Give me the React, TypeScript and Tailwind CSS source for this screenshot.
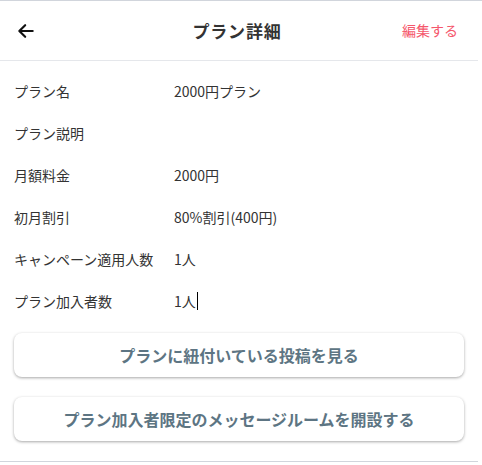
export default function App() {
  const rows = [
    { label: 'プラン名', value: '2000円プラン' },
    { label: 'プラン説明', value: '' },
    { label: '月額料金', value: '2000円' },
    { label: '初月割引', value: '80%割引(400円)' },
    { label: 'キャンペーン適用人数', value: '1人' },
    { label: 'プラン加入者数', value: '1人', caret: true },
  ];

  return (
    <div
      className="w-[482px] h-[465px] bg-white border-t border-gray-300 text-[#333]"
      style={{ fontFamily: '"Noto Sans CJK JP", "Noto Sans", sans-serif' }}
    >
      <div className="w-[478px]">
        <header className="h-[60px] flex items-center justify-between px-4 border-b border-gray-200">
          <svg width="20" height="20" viewBox="0 0 24 24" fill="none" stroke="#111" strokeWidth="2.6" strokeLinecap="round" strokeLinejoin="round">
            <path d="M20 12H5" />
            <path d="M11 5l-7 7 7 7" />
          </svg>
          <h1 className="text-[17px] font-bold ml-9 tracking-wider">プラン詳細</h1>
          <button className="text-[14px] text-[#f5576c] pr-1">編集する</button>
        </header>

        <div className="pt-[17px] pl-[14px]">
          {rows.map((r) => (
            <div key={r.label} className="h-[42px] flex items-start text-[14px]">
              <div className="w-[160px] leading-[26px]">{r.label}</div>
              <div className="leading-[26px] flex items-center">
                {r.value}
                {r.caret && <span className="inline-block w-px h-[18px] bg-black ml-[1px]" />}
              </div>
            </div>
          ))}
        </div>

        <div className="px-[14px] pt-[3px] flex flex-col gap-[20px]">
          <button className="h-[44px] rounded-lg bg-white shadow-[0_1px_3px_rgba(0,0,0,0.35)] text-[16px] font-bold text-[#5d7583]">
            プランに紐付いている投稿を見る
          </button>
          <button className="h-[44px] rounded-lg bg-white shadow-[0_1px_3px_rgba(0,0,0,0.35)] text-[16px] font-bold text-[#5d7583]">
            プラン加入者限定のメッセージルームを開設する
          </button>
        </div>

        <div className="mt-[20px] border-b border-gray-300" />
      </div>
    </div>
  );
}
